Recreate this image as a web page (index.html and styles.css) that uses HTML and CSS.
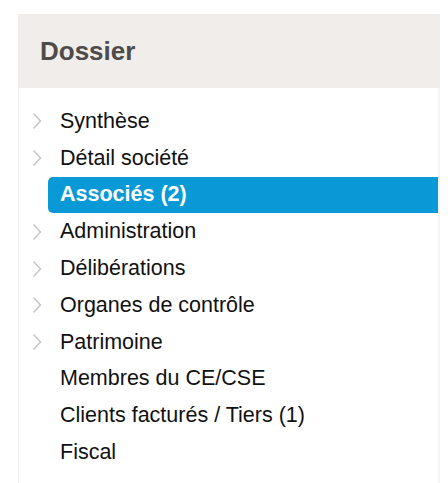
FILE: index.html
```html
<!DOCTYPE html>
<html lang="fr">
<head>
<meta charset="utf-8">
<title>Dossier</title>
<link rel="stylesheet" href="styles.css">
</head>
<body>
<div class="panel">
  <div class="panel-header">Dossier</div>
  <ul class="menu">
    <li class="item"><span class="chev"><svg width="10" height="18" viewBox="0 0 10 18"><polyline points="1.5,1.5 8.5,9 1.5,16.5"/></svg></span><span class="label">Synthèse</span></li>
    <li class="item"><span class="chev"><svg width="10" height="18" viewBox="0 0 10 18"><polyline points="1.5,1.5 8.5,9 1.5,16.5"/></svg></span><span class="label">Détail société</span></li>
    <li class="item active"><span class="chev"></span><span class="label">Associés (2)</span></li>
    <li class="item"><span class="chev"><svg width="10" height="18" viewBox="0 0 10 18"><polyline points="1.5,1.5 8.5,9 1.5,16.5"/></svg></span><span class="label">Administration</span></li>
    <li class="item"><span class="chev"><svg width="10" height="18" viewBox="0 0 10 18"><polyline points="1.5,1.5 8.5,9 1.5,16.5"/></svg></span><span class="label">Délibérations</span></li>
    <li class="item"><span class="chev"><svg width="10" height="18" viewBox="0 0 10 18"><polyline points="1.5,1.5 8.5,9 1.5,16.5"/></svg></span><span class="label">Organes de contrôle</span></li>
    <li class="item"><span class="chev"><svg width="10" height="18" viewBox="0 0 10 18"><polyline points="1.5,1.5 8.5,9 1.5,16.5"/></svg></span><span class="label">Patrimoine</span></li>
    <li class="item"><span class="chev"></span><span class="label">Membres du CE/CSE</span></li>
    <li class="item"><span class="chev"></span><span class="label">Clients facturés / Tiers (1)</span></li>
    <li class="item"><span class="chev"></span><span class="label">Fiscal</span></li>
  </ul>
</div>
</body>
</html>
```
FILE: styles.css
```css
html, body {
  margin: 0;
  padding: 0;
  background: #ffffff;
}
body {
  font-family: "Liberation Sans", Arial, sans-serif;
  color: #111111;
}
.panel {
  margin: 14px 0 0 18px;
  width: 422px;
}
.panel-header {
  height: 74px;
  background: #f0edeb;
  display: flex;
  align-items: center;
  padding-left: 22px;
  font-size: 26px;
  font-weight: bold;
  color: #4e4b4a;
}
.menu {
  list-style: none;
  margin: 0;
  padding: 15px 0 12px 0;
  width: 419px;
  border-left: 1px solid #f4f3f2;
  border-right: 2px solid #f6f5f4;
}
.item {
  display: flex;
  height: 36.8px;
  align-items: stretch;
  font-size: 21.5px;
}
.chev {
  width: 29px;
  flex: none;
  display: flex;
  align-items: center;
  padding-left: 13px;
  box-sizing: border-box;
}
.chev svg polyline {
  fill: none;
  stroke: #c6c6c6;
  stroke-width: 1.5;
}
.label {
  flex: 1;
  display: flex;
  align-items: center;
  padding: 0 12px;
}
.item.active .label {
  background: #0a99d7;
  color: #ffffff;
  font-weight: bold;
  border-radius: 5px 0 0 5px;
}
```
